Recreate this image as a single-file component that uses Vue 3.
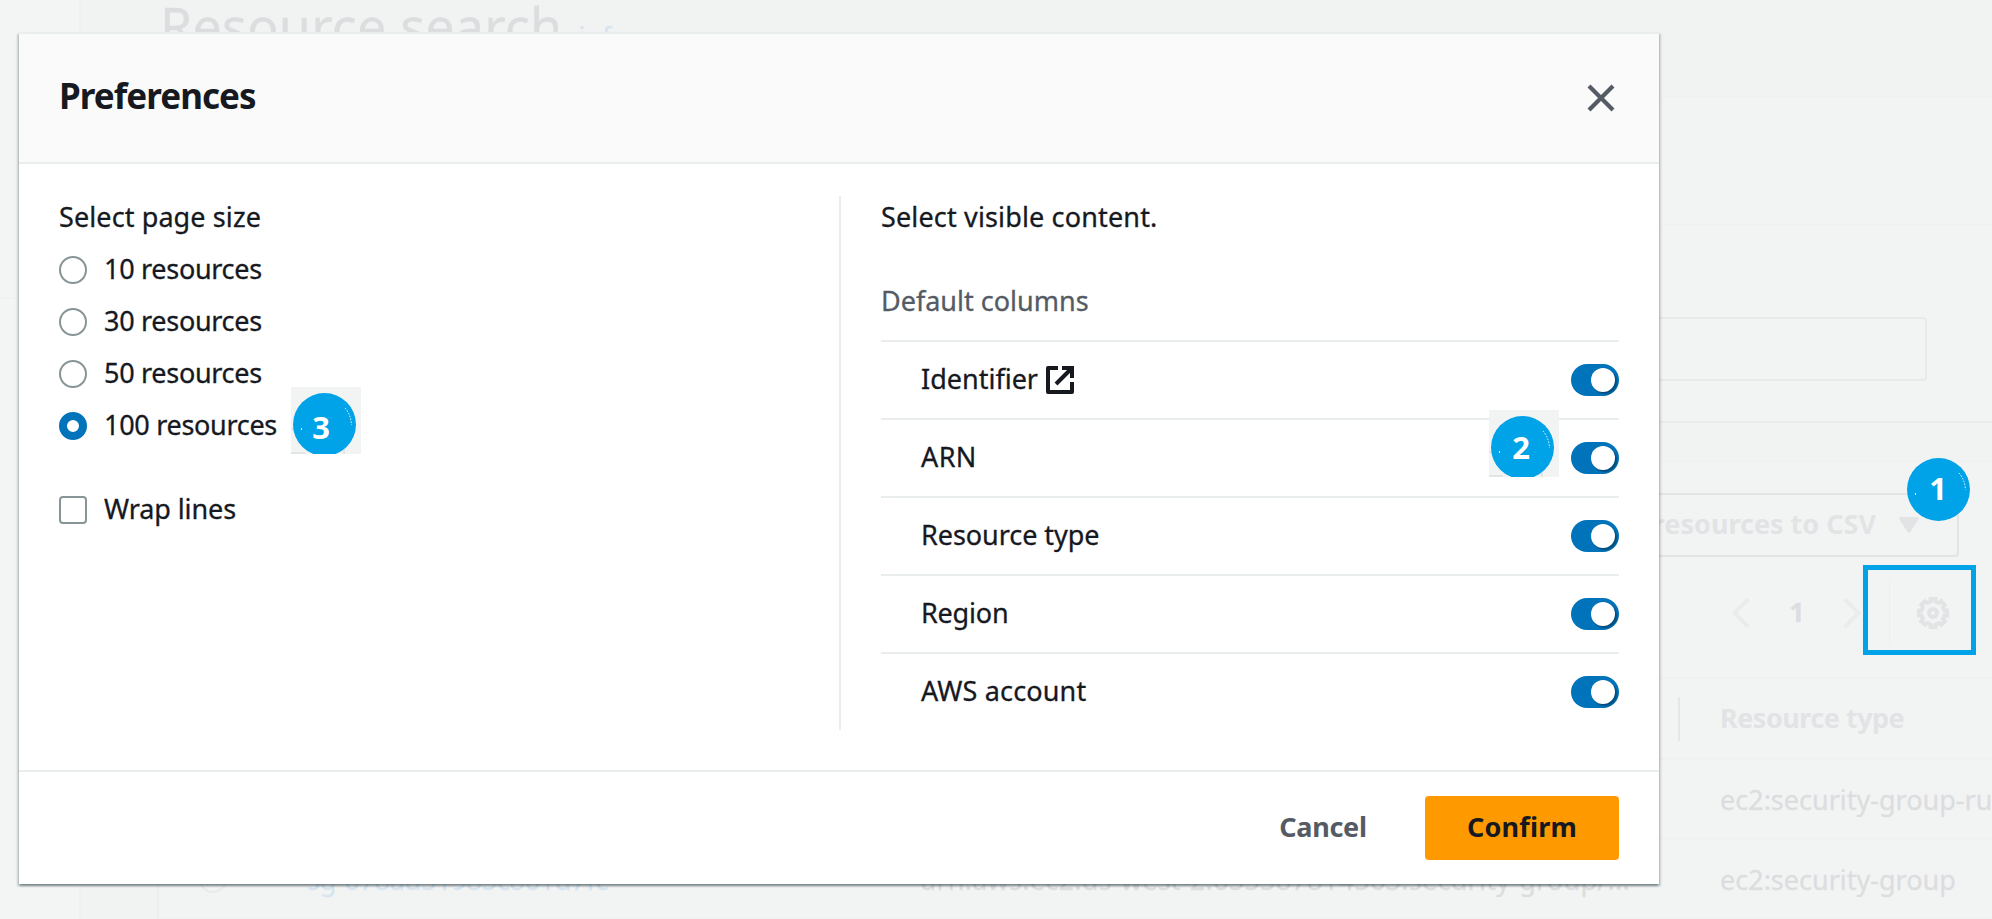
<script setup>
import { ref } from 'vue'

const sizes = [10, 30, 50, 100]
const pageSize = ref(100)
const columns = ref([
  { id: 'identifier', label: 'Identifier', external: true, on: true },
  { id: 'arn', label: 'ARN', on: true },
  { id: 'kind', label: 'Resource type', on: true },
  { id: 'region', label: 'Region', on: true },
  { id: 'account', label: 'AWS account', on: true },
])
const badges = [
  { n: 1, cls: 'badge-one' },
  { n: 2, cls: 'badge-two' },
  { n: 3, cls: 'badge-three' },
]
</script>

<template>
  <div class="screen">
    <div class="page">
      <aside class="rail"></aside>
      <main class="main">
        <header class="page-head">
          <h1>Resource search</h1><a class="info">info</a>
        </header>
        <section class="search-panel">
          <div class="panel-head"></div>
          <div class="panel-body"><div class="search-input"></div></div>
        </section>
        <section class="results">
          <div class="actions">
            <button class="export">
              <span>Export 100 resources to CSV</span>
              <svg width="20" height="16" viewBox="0 0 20 16"><path d="M1.5 1.5h17L10 14.5z" fill="#e2e3e5" stroke="#e2e3e5" stroke-width="3" stroke-linejoin="round" /></svg>
            </button>
          </div>
          <div class="pager">
            <svg class="prev" width="18" height="32" viewBox="0 0 18 32"><path d="M16.5 2 2.5 16l14 14" /></svg>
            <b>1</b>
            <svg class="next" width="18" height="32" viewBox="0 0 18 32"><path d="M1.5 2l14 14-14 14" /></svg>
            <i class="pager-rule"></i>
            <svg class="gear" width="32" height="32" viewBox="0 0 32 32">
              <path d="M13.5 2h5v2.4l3.5 1.5 2.1-1.7 3.7 3.7-1.7 2.1 1.5 3.5H30v5h-2.4l-1.5 3.5 1.7 2.1-3.7 3.7-2.1-1.7-3.5 1.5V30h-5v-2.4L10 26.1l-2.1 1.7-3.7-3.7 1.7-2.1-1.5-3.5H2v-5h2.4l1.5-3.5-1.7-2.1 3.7-3.7L10 5.900l3.500-1.500z" />
              <circle cx="16" cy="16" r="4" />
            </svg>
          </div>
          <div class="table-head"><span>Resource type</span></div>
          <div class="table-row"><span class="type">ec2:security-group-ru</span></div>
          <div class="table-row">
            <i class="pick"></i>
            <span class="link">sg-078ad51985c861d7fc</span>
            <span class="arn-text">arn:aws:ec2:us-west-2:655587814563:security-group/...</span>
            <span class="type">ec2:security-group</span>
          </div>
        </section>
      </main>
    </div>

    <div class="modal" role="dialog">
      <header class="modal-head">
        <h2>Preferences</h2>
        <button class="close">
          <svg width="28" height="28" viewBox="0 0 28 28"><path d="M2 2l24 24M26 2 2 26" stroke="#545b64" stroke-width="4.200" /></svg>
        </button>
      </header>
      <div class="modal-body">
        <section class="left">
          <div class="group-title">Select page size</div>
          <label v-for="s in sizes" :key="s" class="option" @click="pageSize = s">
            <i class="radio" :class="{ on: pageSize === s }"></i>
            <span>{{ s }} resources</span>
          </label>
          <label class="option wrap"><i class="check"></i><span>Wrap lines</span></label>
        </section>
        <section class="right">
          <div class="content-title">Select visible content.</div>
          <div class="columns-title">Default columns</div>
          <div v-for="c in columns" :key="c.id" class="column-row" :class="c.id">
            <span class="column-label">{{ c.label }}</span>
            <svg v-if="c.external" class="external" width="28" height="28" viewBox="0 0 28 28" fill="none" stroke="#16191f" stroke-width="4">
              <path d="M12 2H2v24h24V16" stroke-linejoin="round" />
              <path d="M16 2h10v10" />
              <path d="M25 3 10 18" />
            </svg>
            <i class="toggle" :class="{ off: !c.on }" @click="c.on = !c.on"></i>
          </div>
        </section>
      </div>
      <footer class="modal-foot">
        <button class="cancel"><span>Cancel</span></button>
        <button class="confirm"><span>Confirm</span></button>
      </footer>
    </div>

    <div class="highlight"></div>
    <div v-for="b in badges" :key="b.n" class="badge" :class="b.cls">
      <svg width="70" height="67" viewBox="0 0 70 67">
        <g v-if="b.n !== 1" fill="#e2e4e5">
          <path d="M0 65h14v2H0zM52 60h2v7h-2z" /><path d="M0 41h3v2H0z" />
        </g>
        <circle cx="33.500" cy="37.500" r="31.500" fill="#00a2e8" />
        <path d="M54 21q6 7 6.500 17" fill="none" stroke="#fff" stroke-width="1" stroke-dasharray="1.500 1.500" />
        <path d="M10 41h1v2h-1z" fill="#fff" />
      </svg>
      <b>{{ b.n }}</b>
    </div>
  </div>
</template>

<style>
body { margin: 0; overflow: hidden; }
</style>

<style scoped>
.screen {
  position: relative;
  width: 1992px;
  height: 919px;
  overflow: hidden;
  background: #f2f4f4;
  color: #16191f;
  font: 27px/40px "Noto Sans", "Open Sans", sans-serif;
}
.screen * { box-sizing: border-box; }
button { border: 0; background: none; padding: 0; margin: 0; font: inherit; color: inherit; }
svg { display: block; flex: none; }
span { white-space: nowrap; }

.page { display: flex; height: 919px; color: #dcdddf; -webkit-text-stroke: .3px; }
.rail { width: 79px; flex: none; background: linear-gradient(#f3f5f4 298px, #eff1f1 298px, #eff1f1 299px, #f3f5f4 299px); }
.main { flex: none; width: 1913px; border-left: 2px solid #eff1f1; background: #f1f3f3; }
.page-head { height: 95px; padding-left: 79px; display: flex; }
.page-head h1 { margin: -9px 0 0; font-size: 52px; line-height: 70px; font-weight: 400; letter-spacing: .2px; white-space: nowrap; }
.info { margin: 17px 0 0 16px; font-size: 27px; line-height: 40px; color: #d6e5f0; }
.search-panel { height: 328px; margin-left: 77px; background: #f2f4f4; border-top: 2px solid #eff1f1; border-bottom: 2px solid #e9ebeb; }
.panel-head { height: 127px; }
.panel-body { border-top: 1px solid #eff1f1; padding: 92px 65px 0; }
.search-input { height: 64px; border: 2px solid #e8eaea; border-radius: 4px; }
.results { margin: 38px 0 0 76px; height: 458px; border-left: 2px solid #eceeee; border-top: 1px solid #eff1f1; background: #f2f4f4; }
.actions { display: flex; justify-content: flex-end; padding: 31px 33px 0 0; }
.export { height: 64px; border: 2px solid #e2e3e5; border-radius: 4px; padding: 0 38px 0 32px; display: flex; align-items: center; gap: 23px; font-weight: 700; color: #e2e3e5; -webkit-text-stroke: 0; }
.export span { padding-bottom: 2px; }
.export svg { margin-bottom: 1px; }
.pager { height: 120px; padding: 0 43px 9px 0; display: flex; justify-content: flex-end; align-items: center; }
.pager b { width: 20px; margin: 0 36px 2px 37px; text-align: center; color: #dcdddf; }
.prev path, .next path { fill: none; stroke: #eaebec; stroke-width: 4; }
.pager-rule { width: 1px; height: 64px; margin: 0 27px 0 28px; background: #eceeee; }
.gear { fill: none; stroke: #e2e3e5; stroke-width: 4; }
.table-head { height: 83px; border-top: 2px solid #eff1f1; border-bottom: 2px solid #eff1f1; display: flex; justify-content: flex-end; font-weight: 700; color: #e2e3e5; letter-spacing: -.5px; -webkit-text-stroke: 0; }
.table-head span { width: 314px; height: 44px; margin-top: 18px; padding-left: 40px; border-left: 2px solid #e4e6e7; line-height: 41px; }
.table-row { height: 80px; border-bottom: 2px solid #f0f2f2; display: flex; align-items: center; }
.type { width: 272px; flex: none; margin-left: auto; padding-top: 1px; }
.pick { flex: none; width: 28px; height: 28px; border: 2px solid #e8eaea; border-radius: 50%; margin-left: 40px; }
.link { width: 614px; margin-left: 80px; padding-top: 1px; color: #d6e5f0; letter-spacing: -.3px; }
.arn-text { padding-top: 1px; letter-spacing: .25px; }

.modal {
  position: absolute;
  left: 19px;
  top: 32px;
  width: 1640px;
  height: 852px;
  background: #fff;
  border-top: 2px solid #eaeded;
  box-shadow: 0 2px 2px 0 rgba(0, 28, 36, .3), 2px 2px 2px 0 rgba(0, 28, 36, .15), -2px 2px 2px 0 rgba(0, 28, 36, .15);
  -webkit-text-stroke: .3px;
}
.modal-head { height: 130px; padding: 0 44px 2px 40px; background: #fafafa; border-bottom: 2px solid #eaeded; display: flex; justify-content: space-between; align-items: center; }
.modal-head h2 { margin: 0 0 3px; font-size: 35px; font-weight: 700; letter-spacing: -.95px; -webkit-text-stroke: 0; }
.close { margin-top: 2px; }
.modal-body { display: flex; height: 606px; padding: 32px 40px 40px; }
.left { width: 780px; }
.group-title { margin-bottom: 8px; padding-top: 1px; line-height: 39px; letter-spacing: .1px; }
.option { display: flex; align-items: center; height: 52px; letter-spacing: -.3px; }
.option span { padding: 0 0 2px 17px; }
.wrap { margin-top: 32px; letter-spacing: -.1px; }
.radio { width: 28px; height: 28px; border: 2px solid #879596; border-radius: 50%; }
.radio.on { border: 8px solid #0073bb; }
.check { width: 28px; height: 28px; border: 2px solid #879596; border-radius: 4px; }
.right { width: 780px; padding-left: 40px; border-left: 2px solid #eaeded; }
.content-title { padding-top: 1px; line-height: 39px; letter-spacing: .15px; }
.columns-title { margin: 44px 0 20px; padding-top: 1px; line-height: 39px; color: #545b64; letter-spacing: 0; }
.column-row { height: 78px; padding-left: 40px; border-top: 2px solid #eaeded; display: flex; align-items: center; }
.column-label { padding-bottom: 3px; }
.arn .column-label { letter-spacing: .4px; }
.kind .column-label { letter-spacing: -.05px; }
.region .column-label { letter-spacing: -.2px; }
.account .column-label { letter-spacing: .15px; }
.external { margin-left: 8px; }
.toggle { width: 48px; height: 32px; margin-left: auto; border-radius: 16px; background: #0073bb; display: flex; justify-content: flex-end; padding: 4px; }
.toggle::after { content: ""; width: 24px; height: 24px; border-radius: 50%; background: #fff; box-shadow: 2px 2px 2px rgba(0, 0, 0, .35); }
.toggle.off { justify-content: flex-start; background: #879596; }
.modal-foot { height: 114px; padding: 24px 40px; border-top: 2px solid #eaeded; display: flex; justify-content: flex-end; font-weight: 700; -webkit-text-stroke: 0; }
.cancel { width: 168px; margin-right: 1px; color: #545b64; letter-spacing: -.3px; }
.confirm { width: 194px; margin-left: 17px; border-radius: 4px; background: #f90; letter-spacing: .2px; }
.modal-foot span { display: block; padding-bottom: 3px; }

.highlight { position: absolute; left: 1863px; top: 565px; width: 113px; height: 90px; border: 5px solid #00a2e8; }
.badge { position: absolute; width: 70px; height: 67px; overflow: hidden; background: #f2f4f4; color: #fff; }
.badge b { position: absolute; left: 4px; top: 14px; width: 58px; text-align: center; font-size: 31px; line-height: 44px; }
.badge-one { left: 1905px; top: 452px; height: 70px; background: none; }
.badge-one svg { overflow: visible; }
.badge-two { left: 1489px; top: 410px; }
.badge-two b { left: 3px; top: 15px; }
.badge-three { left: 291px; top: 387px; }
.badge-three b { top: 18px; left: 1px; }
</style>
